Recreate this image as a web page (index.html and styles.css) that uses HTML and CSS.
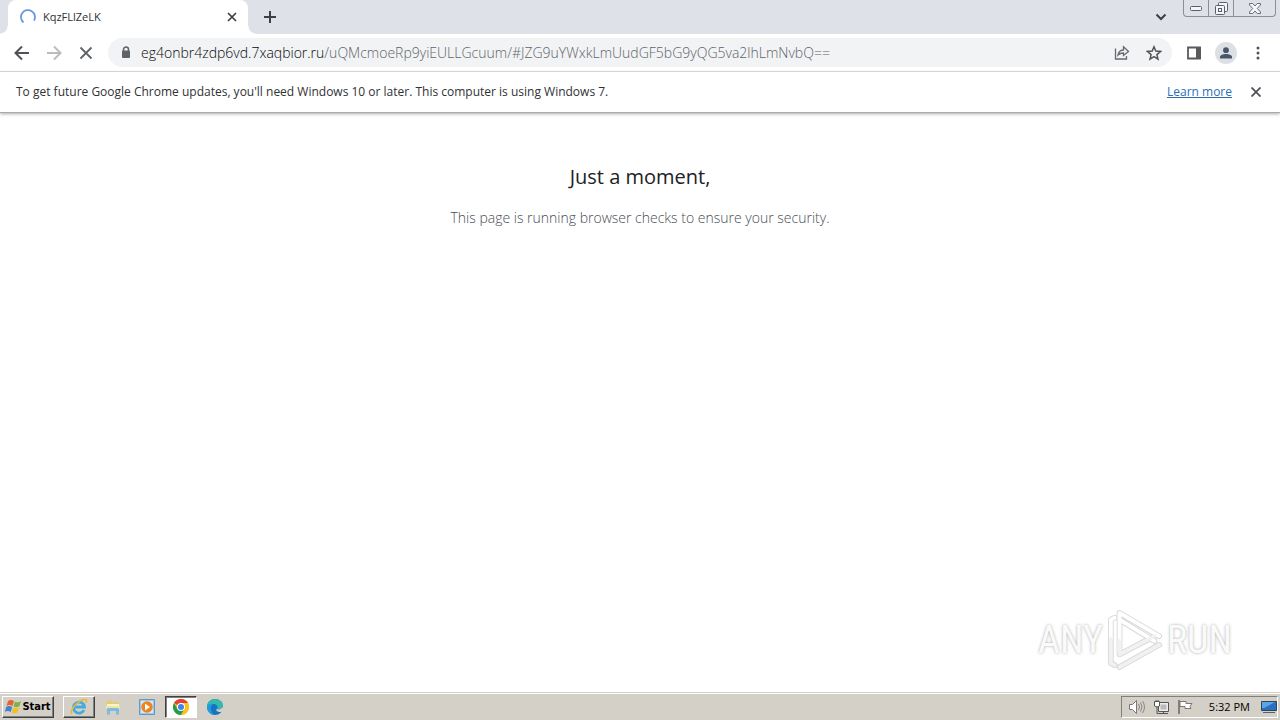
FILE: index.html
```html
<!DOCTYPE html>
<html lang="en">
<head>
<meta charset="utf-8">
<title>KqzFLlZeLK</title>
<link rel="stylesheet" href="styles.css">
</head>
<body>
<header class="tabstrip">
  <div class="tab">
    <svg class="spinner" width="16" height="16" viewBox="0 0 16 16"><path d="M3.500 13.500A7 7 0 1 1 14 11.600" fill="none" stroke="#6a96e2" stroke-width="1.800"/></svg>
    <span class="tab-title">KqzFLlZeLK</span>
    <button class="icon-btn tab-close" aria-label="Close tab"><svg width="10" height="10" viewBox="0 0 10 10"><path d="M1 1l8 8M9 1l-8 8" stroke="#3c4043" stroke-width="1.7"/></svg></button>
  </div>
  <button class="icon-btn new-tab" aria-label="New tab"><svg width="12" height="12" viewBox="0 0 12 12"><path d="M6 0v12M0 6h12" stroke="#3c4043" stroke-width="2"/></svg></button>
  <button class="icon-btn tab-search" aria-label="Search tabs"><svg width="12" height="8" viewBox="0 0 12 8"><path d="M1.5 1.5L6 6l4.500-4.500" fill="none" stroke="#3c4043" stroke-width="2"/></svg></button>
  <div class="window-controls">
    <button class="win-btn" aria-label="Minimize"><svg width="12" height="6" viewBox="0 0 12 6"><rect x=".5" y="1.500" width="11" height="4" rx="1" fill="#f4f5f7" stroke="#5b6068"/></svg></button>
    <button class="win-btn" aria-label="Restore"><svg width="13" height="13" viewBox="0 0 13 13"><rect x="3.500" y=".5" width="9" height="9" rx="1" fill="#f4f5f7" stroke="#5b6068"/><rect x=".5" y="3.500" width="9" height="9" rx="1" fill="#f4f5f7" stroke="#5b6068"/><rect x="3.500" y="6.500" width="3" height="3" fill="none" stroke="#5b6068"/></svg></button>
    <button class="win-btn win-close" aria-label="Close"><svg width="12" height="11" viewBox="0 0 12 11"><path d="M.5.5h3.300L6 3 8.200.5h3.300v1.500L8.300 5.500l3.200 3.500v1.500H8.200L6 8l-2.200 2.500H.5V9l3.200-3.500L.5 2z" fill="#f4f5f7" stroke="#6b7078"/></svg></button>
  </div>
</header>
<nav class="toolbar">
  <button class="icon-btn" aria-label="Back"><svg width="16" height="16" viewBox="0 0 16 16"><path d="M15 8H2M8 1.500L1.500 8 8 14.500" fill="none" stroke="#4f5357" stroke-width="2"/></svg></button>
  <button class="icon-btn" aria-label="Forward"><svg width="16" height="16" viewBox="0 0 16 16"><path d="M1 8h13M8 1.500L14.500 8 8 14.500" fill="none" stroke="#babcbe" stroke-width="2"/></svg></button>
  <button class="icon-btn" aria-label="Stop"><svg width="14" height="14" viewBox="0 0 14 14"><path d="M1.500 1.500l11 11M12.500 1.500l-11 11" stroke="#5f6368" stroke-width="1.800"/></svg></button>
  <div class="omnibox">
    <svg class="lock" width="10" height="13" viewBox="0 0 10 13"><path d="M2.500 6V3.500a2.500 2.500 0 0 1 5 0V6" fill="none" stroke="#5f6368" stroke-width="1.500"/><rect x="1" y="4.500" width="8" height="7.500" rx="1" fill="#5f6368"/></svg>
    <div class="url"><span class="host">eg4onbr4zdp6vd.7xaqbior.ru</span>/uQMcmoeRp9yiEULLGcuum/#JZG9uYWxkLmUudGF5bG9yQG5va2lhLmNvbQ==</div>
    <button class="icon-btn" aria-label="Share"><svg width="16" height="15" viewBox="0 0 16 15"><path d="M1.500 3.500v10.500h11V11M4 10c.7-3.300 2.500-5 5.500-5V1.800L14.500 6.500 9.500 10.500V8C7 8 5.500 8.500 4 10z" fill="none" stroke="#666a6f" stroke-width="1.300"/></svg></button>
    <button class="icon-btn" aria-label="Bookmark"><svg width="16" height="16" viewBox="0 0 16 16"><path d="M8 1.800l1.800 4.300 4.700.4-3.600 3.100 1.100 4.600-4-2.500-4 2.500 1.100-4.600L1.500 6.500l4.700-.4z" fill="none" stroke="#505458" stroke-width="1.500"/></svg></button>
  </div>
  <button class="icon-btn" aria-label="Side panel"><svg width="14" height="14" viewBox="0 0 14 14"><path d="M1 1.500h12v11H1z" fill="#fff" stroke="#5a5a5c" stroke-width="1.800"/><path d="M9 1h5v12H9z" fill="#5a5a5c"/></svg></button>
  <button class="icon-btn avatar" aria-label="Profile"><svg width="12" height="12" viewBox="0 0 12 12"><circle cx="6" cy="3.200" r="2.900" fill="#4a556c"/><path d="M0 11.500V10c0-2 3-3 6-3s6 1 6 3v1.500z" fill="#4a556c"/></svg></button>
  <button class="icon-btn menu" aria-label="Menu"><svg width="4" height="14" viewBox="0 0 4 14"><g fill="#505458"><circle cx="2" cy="2" r="1.500"/><circle cx="2" cy="7" r="1.500"/><circle cx="2" cy="12" r="1.500"/></g></svg></button>
</nav>
<aside class="infobar">
  <span class="info-text">To get future Google Chrome updates, you'll need Windows 10 or later. This computer is using Windows 7.</span>
  <a class="learn" href="#">Learn more</a>
  <button class="icon-btn" aria-label="Dismiss"><svg width="10" height="10" viewBox="0 0 10 10"><path d="M.5.5l9 9M9.500.5l-9 9" stroke="#505458" stroke-width="1.800"/></svg></button>
</aside>
<main class="page">
  <h1>Just a moment,</h1>
  <p>This page is running browser checks to ensure your security.</p>
  <div class="watermark">
    <span>ANY</span>
    <svg width="58" height="64" viewBox="0 0 60 66"><g fill="none" stroke-linejoin="round" stroke-linecap="round"><g stroke="#dadada" stroke-width="6"><path d="M14 46V5l41 24M14 12l36 22"/><path d="M9 10l-4 2v45l4 2M14 48l36-19M14 61l41-23"/></g><g stroke="#fff" stroke-width="4"><path d="M14 46V5l41 24M14 12l36 22M9 10l-4 2v20"/></g><g stroke="#f1f1f1" stroke-width="4"><path d="M5 32v25l4 2M14 34v14l36-19M14 61l41-23"/></g></g></svg>
    <span>RUN</span>
  </div>
</main>
<footer class="taskbar">
  <button class="start"><svg width="17" height="16" viewBox="0 0 17 16"><path d="M3 2c2-1.500 4-1.500 6 0L7.500 7c-2-1.300-4-1.300-6 0z" fill="#e8642c"/><path d="M10 2.500c2 1.200 4 1.200 6-.5l-1.500 5c-2 1.500-4 1.500-6 .3z" fill="#7cb342"/><path d="M1.200 8c2-1.300 4-1.300 6 0l-1.500 5c-2-1.300-4-1.300-6 0z" fill="#3f83cd"/><path d="M8.200 8.500c2 1.200 4 1.200 6-.3l-1.500 5c-2 1.500-4 1.500-6 .3z" fill="#f5bd27"/></svg><span>Start</span></button>
  <button class="task raised" aria-label="Internet Explorer"><svg width="18" height="18" viewBox="0 0 18 18"><path d="M14 12a5.500 5.500 0 1 1 .5-3H5" fill="none" stroke="#45a9df" stroke-width="2.800"/><path d="M2 16C-1 13 7 3 14 1.500c3-.5 3 1.500 1.800 3.500" fill="none" stroke="#e6b739" stroke-width="1.500"/></svg></button>
  <button class="task" aria-label="File Explorer"><svg width="16" height="16" viewBox="0 0 16 16"><path d="M1 3l5-2 1 2h7v9H1z" fill="#e3cb78"/><path d="M2 5h12v4H2z" fill="#fbf5cd"/><path d="M1 7h14v3H1z" fill="#f1e3a0"/><path d="M2 15.500V10q0-1 1-1h10q1 0 1 1v5.500h-3V12H5v3.500z" fill="#7dbcdc"/></svg></button>
  <button class="task" aria-label="Media Player"><svg width="16" height="16" viewBox="0 0 16 16"><path d="M.5.5h15v15H.5z" fill="#9cc8ea" stroke="#5c9acb"/><path d="M2 2h12v12H2z" fill="#d6e9f5"/><circle cx="8" cy="8" r="5.800" fill="#ed8420"/><path d="M6 4.500v7l5-3.500z" fill="#fff"/></svg></button>
  <button class="task pressed" aria-label="Google Chrome"><svg width="16" height="16" viewBox="0 0 16 16"><circle cx="8" cy="8" r="8" fill="#f8c31c"/><path d="M8 8L1.070 4A8 8 0 0 1 14.930 4z" fill="#e34133"/><path d="M8 16A8 8 0 0 1 1.070 4L4.500 10 8 8l3.500 2z" fill="#269a50"/><path d="M8 16a8 8 0 0 0 6.930-12H8v4l3.500 2z" fill="#f8c31c"/><circle cx="8" cy="8" r="4" fill="#fff"/><circle cx="8" cy="8" r="3" fill="#4182ec"/></svg></button>
  <button class="task" aria-label="Microsoft Edge"><svg width="16" height="16" viewBox="0 0 16 16"><circle cx="8" cy="8" r="8" fill="#1574bf"/><path d="M0 8C0 3 4 0 8 0c5 0 8 3 8 6.500 0 3-3 4-6 3.500 2-3-1-5-4-5S1 6 0 8z" fill="#35b9ae"/><path d="M0 8c1-3 4-4 6-3-3 2-3 7 1 10.900A8 8 0 0 1 0 8z" fill="#1f9be0"/><path d="M10 10c2 1 4 0 6-2v4c-2 2-6 1-7-1z" fill="#d4d0c8"/></svg></button>
  <div class="tray">
    <svg width="18" height="16" viewBox="0 0 18 16"><path d="M1.500 5.500h3l4-4v13l-4-4h-3z" fill="#fff" stroke="#777"/><path d="M10.500 5q2 3 0 6M12.500 3.500q3 4.500 0 9M14.500 2q4 6 0 12" fill="none" stroke="#888"/></svg>
    <svg width="17" height="16" viewBox="0 0 17 16"><path d="M5.500 3.500h10v9h-10z" fill="#eee" stroke="#555"/><path d="M7.500 5.500h6v5h-6z" fill="#bbb"/><path d="M4 8v6.500h11M10.500 12v2M3 1v2M5 1v2" fill="none" stroke="#555"/><path d="M1.500 2.500h5V7L4 8 1.500 7z" fill="#fff" stroke="#555"/></svg>
    <svg width="17" height="16" viewBox="0 0 17 16"><path d="M2 1v14" stroke="#666" stroke-width="1.500"/><path d="M3 2.500h6v2h6l-2 3 1 2H8v-2H3z" fill="#fff" stroke="#777"/></svg>
    <time class="clock">5:32 PM</time>
    <svg width="16" height="14" viewBox="0 0 16 14"><path d="M.5 1.500h15v9H.5z" fill="#2c6fc0" stroke="#31455c"/><path d="M1 2h13L3 8H1z" fill="#5ea5e4"/><path d="M2 12.500h12" stroke="#52606f"/></svg>
  </div>
</footer>
</body>
</html>
```
FILE: styles.css
```css
* { box-sizing: border-box; }
body {
  margin: 0;
  min-height: 100vh;
  display: flex;
  flex-direction: column;
  background: #fff;
  color: #303236;
  font-family: "Open Sans", "Noto Sans", sans-serif;
  font-size: 12px;
}
button { font: inherit; color: inherit; border: 0; padding: 0; background: none; }
svg { display: block; flex: none; }
.icon-btn { display: flex; align-items: center; justify-content: center; width: 16px; height: 16px; flex: none; }
.tabstrip { display: flex; height: 34px; background: #dee1e8; padding-left: 8px; }
.tab { position: relative; display: flex; align-items: center; gap: 7px; width: 240px; padding: 0 8px 0 12px; background: #fff; border-radius: 8px 8px 0 0; }
.tab::before, .tab::after { content: ""; position: absolute; bottom: 0; width: 8px; height: 8px; }
.tab::before { right: 100%; background: radial-gradient(circle at 0 0, #dee1e8 7px, #fff 8px); }
.tab::after { left: 100%; background: radial-gradient(circle at 100% 0, #dee1e8 7px, #fff 8px); }
.tab-title { flex: 1; font-size: 11px; line-height: 16px; }
.new-tab { margin: 9px 0 0 14px; }
.tab-search { margin: 9px 14px 0 auto; }
.window-controls { display: flex; height: 17px; margin-right: 4px; border: 1px solid #8b8f98; border-top: 0; border-radius: 0 0 4px 4px; }
.win-btn { display: flex; align-items: center; justify-content: center; width: 25px; border-right: 1px solid #8b8f98; }
.win-close { width: 41px; border: 0; }
.toolbar { display: flex; align-items: center; gap: 16px; height: 38px; padding: 0 14px; border-bottom: 1px solid #dadce0; }
.omnibox { display: flex; align-items: center; flex: 1; min-width: 0; height: 29px; margin: 0 -2px; padding: 0 10px 0 13px; gap: 16px; background: #f1f3f5; border-radius: 15px; }
.lock { margin-right: -6px; }
.url { flex: 1; min-width: 0; overflow: hidden; white-space: nowrap; font-size: 14px; font-weight: 300; color: #5f6368; }
.host { color: #08090a; }
.avatar { width: 22px; height: 22px; margin: 0 -3px; border-radius: 50%; background: #dcdfe4; }
.infobar { display: flex; align-items: center; height: 41px; padding: 0 16px; gap: 16px; border-bottom: 1px solid #aaa; box-shadow: 0 1px 3px #aaa; }
.info-text { flex: 1; }
.info-text, .learn { padding-bottom: 1px; }
.learn { color: #2a6fb8; }
.page { position: relative; flex: 1; padding-top: 48px; text-align: center; }
h1 { margin: 0; font-size: 20px; line-height: 32px; font-weight: 400; color: #202124; }
p { margin: 13px 0 0; font-size: 14px; line-height: 24px; font-weight: 300; color: #484e56; }
.watermark { position: absolute; right: 48px; bottom: 20px; display: flex; align-items: center; gap: 3px; color: #fafafa; font-family: "Roboto Condensed", "Open Sans Condensed", "Roboto", sans-serif; font-size: 38px; text-shadow: 0 0 3px #aaa; }
.taskbar { display: flex; align-items: center; height: 28px; padding: 0 2px; background: #d4d0c8; border-top: 1px solid #d4d0c8; box-shadow: inset 0 1px #fff; }
.start, .task { display: flex; align-items: center; justify-content: center; height: 22px; }
.start, .raised { border: 1px solid; border-color: #fff #404040 #404040 #fff; box-shadow: inset -1px -1px #808080; }
.start { width: 52px; margin-right: 9px; gap: 0; font-family: "DejaVu Sans Condensed", sans-serif; font-size: 11px; font-weight: 700; color: #000; }
.task { width: 32px; margin-right: 2px; }
.pressed { background: #fff; border: 1px solid; border-color: #404040 #fff #fff #404040; box-shadow: inset 1px 1px #808080; }
.tray { display: flex; align-items: center; gap: 7px; height: 22px; margin-left: auto; padding: 0 0 0 6px; border: 1px solid; border-color: #808080 #fff #fff #808080; }
.clock { margin: 0 4px 0 8px; font-size: 11px; color: #000; }
```
